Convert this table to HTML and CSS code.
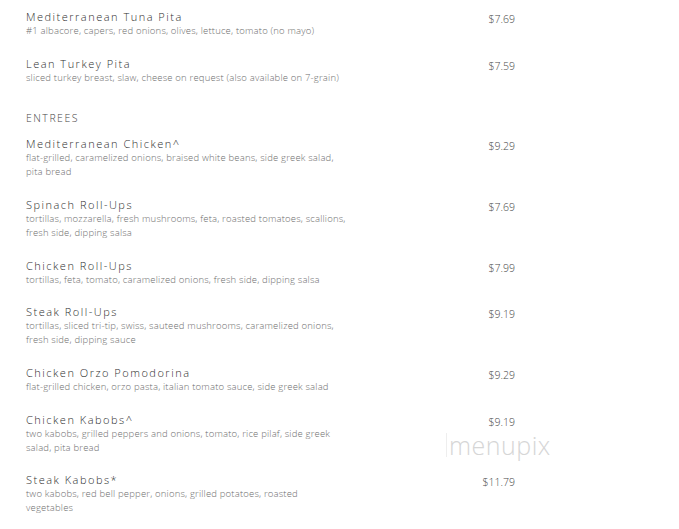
FILE: index.html
```html
<!DOCTYPE html>
<html>
<head>
<meta charset="utf-8">
<link rel="stylesheet" href="styles.css">
</head>
<body>
<div class="menu">
  <div class="item">
    <div class="info"><div class="name">Mediterranean Tuna Pita</div><div class="desc">#1 albacore, capers, red onions, olives, lettuce, tomato (no mayo)</div></div>
    <div class="price">$7.69</div>
  </div>
  <div class="item">
    <div class="info"><div class="name">Lean Turkey Pita</div><div class="desc">sliced turkey breast, slaw, cheese on request (also available on 7-grain)</div></div>
    <div class="price">$7.59</div>
  </div>
  <div class="section">ENTREES</div>
  <div class="item">
    <div class="info"><div class="name">Mediterranean Chicken^</div><div class="desc">flat-grilled, caramelized onions, braised white beans, side greek salad, pita bread</div></div>
    <div class="price">$9.29</div>
  </div>
  <div class="item">
    <div class="info"><div class="name">Spinach Roll-Ups</div><div class="desc">tortillas, mozzarella, fresh mushrooms, feta, roasted tomatoes, scallions, fresh side, dipping salsa</div></div>
    <div class="price">$7.69</div>
  </div>
  <div class="item">
    <div class="info"><div class="name">Chicken Roll-Ups</div><div class="desc">tortillas, feta, tomato, caramelized onions, fresh side, dipping salsa</div></div>
    <div class="price">$7.99</div>
  </div>
  <div class="item">
    <div class="info"><div class="name">Steak Roll-Ups</div><div class="desc">tortillas, sliced tri-tip, swiss, sauteed mushrooms, caramelized onions, fresh side, dipping sauce</div></div>
    <div class="price">$9.19</div>
  </div>
  <div class="item">
    <div class="info"><div class="name">Chicken Orzo Pomodorina</div><div class="desc">flat-grilled chicken, orzo pasta, italian tomato sauce, side greek salad</div></div>
    <div class="price">$9.29</div>
  </div>
  <div class="item">
    <div class="info"><div class="name">Chicken Kabobs^</div><div class="desc">two kabobs, grilled peppers and onions, tomato, rice pilaf, side greek salad, pita bread</div></div>
    <div class="price">$9.19</div>
  </div>
  <div class="item">
    <div class="info"><div class="name">Steak Kabobs*</div><div class="desc">two kabobs, red bell pepper, onions, grilled potatoes, roasted vegetables</div></div>
    <div class="price">$11.79</div>
  </div>
</div>
<div class="watermark">menupix</div>
</body>
</html>
```
FILE: styles.css
```css
html, body {
  margin: 0;
  padding: 0;
  background: #ffffff;
}
body {
  font-family: "Open Sans", "DejaVu Sans", sans-serif;
  position: relative;
  width: 679px;
  height: 529px;
  overflow: hidden;
}
.menu {
  padding: 10px 0 0 26px;
}
.item {
  display: flex;
  padding-bottom: 18.67px;
}
.info {
  width: 320px;
}
.name {
  font-size: 11px;
  font-weight: 300;
  line-height: 14px;
  letter-spacing: 1.5px;
  color: #2e2e2e;
}
.desc {
  font-size: 9.5px;
  font-weight: 300;
  line-height: 14px;
  letter-spacing: 0.18px;
  color: #6e6e6e;
}
.price {
  width: 169px;
  text-align: right;
  font-size: 10.5px;
  font-weight: 300;
  line-height: 14px;
  padding-top: 2px;
  color: #4a4a4a;
}
.section {
  font-size: 10.5px;
  font-weight: 300;
  line-height: 14px;
  letter-spacing: 1.5px;
  color: #444444;
  margin-top: 8px;
  margin-bottom: 12px;
}
.watermark {
  position: absolute;
  left: 446px;
  top: 433px;
  font-size: 25px;
  font-weight: 300;
  letter-spacing: 0.5px;
  color: #d6d6d6;
  border-left: 1px solid #eeeeee;
  padding-left: 2px;
  line-height: 24px;
}
```
